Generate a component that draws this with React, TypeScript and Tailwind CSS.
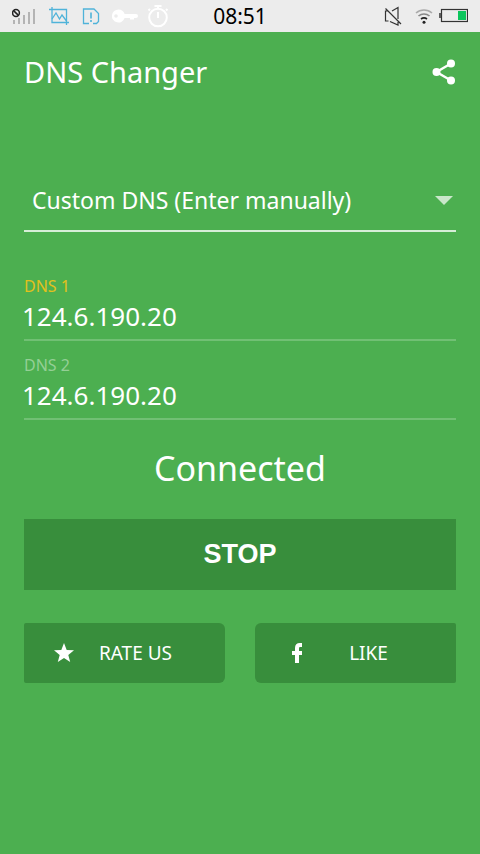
import { useState } from 'react'
import type { ReactNode } from 'react'

type DnsFieldProps = {
  id: string
  label: string
  value: string
  labelClass: string
  onChange: (value: string) => void
}

const presets = ['Custom DNS (Enter manually)', 'Google DNS', 'Open DNS', 'Level 3 DNS']

function StatusBar() {
  return (
    <header className="grid h-8 grid-cols-[1fr_auto_1fr] items-center pr-3 pl-3 bg-[#ececec]">
      <div className="flex items-center">
        <svg width="24" height="20" viewBox="0 0 24 20" fill="none" aria-hidden="true">
          <path d="M2 14v4M7 12v6M12 9v9M17 6v12M22 3v15" stroke="#b4b4b4" strokeWidth="2" />
          <circle cx="4" cy="7" r="3.4" stroke="#222" strokeWidth="1.5" />
          <path d="M1.6 4.6l4.8 4.8" stroke="#222" strokeWidth="1.5" />
        </svg>
        <svg className="ml-3" width="22" height="20" viewBox="0 0 22 20" fill="none" stroke="#4fb3d9" strokeWidth="1.3" aria-hidden="true">
          <path d="M1 3.500h17.500V19M4 1v15.500h17" />
          <path d="M4 13l4-6 3.500 6 2.500-4 4.500 6" />
        </svg>
        <svg className="ml-3" width="18" height="20" viewBox="0 0 18 20" fill="none" stroke="#4fb3d9" strokeWidth="1.3" aria-hidden="true">
          <path d="M7 17.500H1.500V3H12l4.500 4.500v8l-2 2H11" />
          <path d="M9 6.500v6M9 14v2" strokeWidth="1.600" />
        </svg>
        <svg className="ml-3" width="26" height="20" viewBox="0 0 26 20" aria-hidden="true">
          <path fillRule="evenodd" fill="#fff" d="M6.500 3.500a6.500 6.500 0 0 1 6.100 4.500H24a2 2 0 0 1 0 4h-2v1.500h-4V12h-5.400A6.500 6.500 0 1 1 6.500 3.500zM4 8.200a1.800 1.800 0 1 0 0 3.600 1.800 1.800 0 0 0 0-3.600z" />
        </svg>
        <svg className="ml-2" width="24" height="24" viewBox="0 0 24 24" fill="none" stroke="#fff" strokeWidth="2" aria-hidden="true">
          <circle cx="12" cy="13.500" r="8.800" />
          <path d="M8.500 2h7M12 2v3M12 8v6M4 5L2.500 6.500M20 5l1.500 1.500" />
        </svg>
      </div>
      <time className="text-[21px] leading-8 text-black">08:51</time>
      <div className="flex items-center justify-end">
        <svg width="18" height="20" viewBox="0 0 18 20" fill="none" stroke="#333" strokeWidth="1.2" aria-hidden="true">
          <path d="M4 5H1.500v10h3M8 5l6-3.500V13M6 15.500l8 3.500v-3M1.500 2.500L17 18" />
        </svg>
        <svg className="ml-3" width="20" height="20" viewBox="0 0 20 20" fill="none" strokeWidth="1.6" aria-hidden="true">
          <path d="M2 7a12 12 0 0 1 16 0" stroke="#aaa" />
          <path d="M4.500 10a8.500 8.500 0 0 1 11 0" stroke="#888" />
          <path d="M7 13a5 5 0 0 1 6 0" stroke="#222" />
          <circle cx="10" cy="16.200" r="1.500" fill="#222" />
        </svg>
        <svg className="ml-1" width="30" height="16" viewBox="0 0 30 16" aria-hidden="true">
          <rect x="3.500" y="1.500" width="26" height="12" fill="none" stroke="#333" strokeWidth="1.200" />
          <path d="M2 5v5" stroke="#333" strokeWidth="1.500" />
          <path d="M20 3h8v9h-8z" fill="#0cc55c" />
        </svg>
      </div>
    </header>
  )
}

function DnsField({ id, label, value, labelClass, onChange }: DnsFieldProps) {
  return (
    <div className="flex h-[79px] flex-col border-b-2 border-[#71c074]">
      <label htmlFor={id} className={`pt-3 text-base leading-6 ${labelClass}`}>
        {label}
      </label>
      <input
        id={id}
        type="text"
        inputMode="decimal"
        value={value}
        onChange={(event) => onChange(event.target.value)}
        className="h-9 w-full bg-transparent indent-[-2px] text-[26px] leading-9 text-white outline-none"
      />
    </div>
  )
}

function ActionButton({ icon, children, className }: { icon: ReactNode; children: ReactNode; className: string }) {
  return (
    <button type="button" className={`flex h-[60px] flex-1 items-center bg-[#388e3c] pr-7 pl-[30px] text-[19px] ${className}`}>
      {icon}
      <span className="flex-1 text-center">{children}</span>
    </button>
  )
}

export default function App() {
  const [preset, setPreset] = useState(presets[0])
  const [primary, setPrimary] = useState('124.6.190.20')
  const [secondary, setSecondary] = useState('124.6.190.20')
  const [connected, setConnected] = useState(true)

  return (
    <div className="flex min-h-screen flex-col bg-[#4caf50] font-['Noto_Sans',sans-serif] text-white">
      <StatusBar />
      <div className="flex h-20 items-center justify-between px-6">
        <h1 className="text-[29px] leading-10">DNS Changer</h1>
        <button type="button" aria-label="Share">
          <svg width="24" height="26" viewBox="0 0 24 26" fill="#fff" aria-hidden="true">
            <path d="M19 4.500L4.500 13 19 21.500" fill="none" stroke="#fff" strokeWidth="2.400" />
            <circle cx="19" cy="4.500" r="4" />
            <circle cx="4.500" cy="13" r="4" />
            <circle cx="19" cy="21.500" r="4" />
          </svg>
        </button>
      </div>

      <main className="flex flex-col px-6 pt-[58px]">
        <div className="relative border-b-2 border-[#d6eed7]">
          <select
            aria-label="DNS server"
            value={preset}
            onChange={(event) => setPreset(event.target.value)}
            className="h-[60px] w-full appearance-none bg-transparent pr-8 pl-2 text-[23px] outline-none"
          >
            {presets.map((name) => (
              <option key={name} value={name}>
                {name}
              </option>
            ))}
          </select>
          <svg className="pointer-events-none absolute top-[26px] right-[3px]" width="18" height="9" viewBox="0 0 18 9" aria-hidden="true">
            <path d="M0 0h18L9 9z" fill="#c9e7ca" />
          </svg>
        </div>

        <div className="pt-[30px]">
          <DnsField id="dns1" label="DNS 1" value={primary} labelClass="text-[#e3c01c]" onChange={setPrimary} />
          <DnsField id="dns2" label="DNS 2" value={secondary} labelClass="text-[#94cf96]" onChange={setSecondary} />
        </div>

        <p className="pt-6 text-center text-[34px] leading-[48px]">{connected ? 'Connected' : 'Disconnected'}</p>

        <button
          type="button"
          onClick={() => setConnected(!connected)}
          className="mt-[27px] h-[71px] bg-[#388e3c] font-['Liberation_Sans',sans-serif] text-[27px] font-bold"
        >
          {connected ? 'STOP' : 'START'}
        </button>

        <div className="mt-[33px] flex gap-[30px]">
          <ActionButton
            className="rounded-l-xs rounded-r-md"
            icon={
              <svg width="20" height="20" viewBox="0 0 20 20" fill="#fff" aria-hidden="true">
                <path d="M10 0l2.700 6.900 7.300.4-5.700 4.600 1.900 7.100L10 15.100 3.800 19l1.900-7.100L0 7.300l7.300-.4z" />
              </svg>
            }
          >
            RATE US
          </ActionButton>
          <ActionButton
            className="rounded-l-md rounded-r-xs"
            icon={
              <svg width="24" height="20" viewBox="0 0 24 20" fill="#fff" aria-hidden="true">
                <path d="M10 20v-8H7V8h3V5c0-3.300 1.800-5 4.800-5H17v4h-1.500c-1 0-1.500.4-1.500 1.400V8h3v4h-3v8z" />
              </svg>
            }
          >
            LIKE
          </ActionButton>
        </div>
      </main>
    </div>
  )
}
